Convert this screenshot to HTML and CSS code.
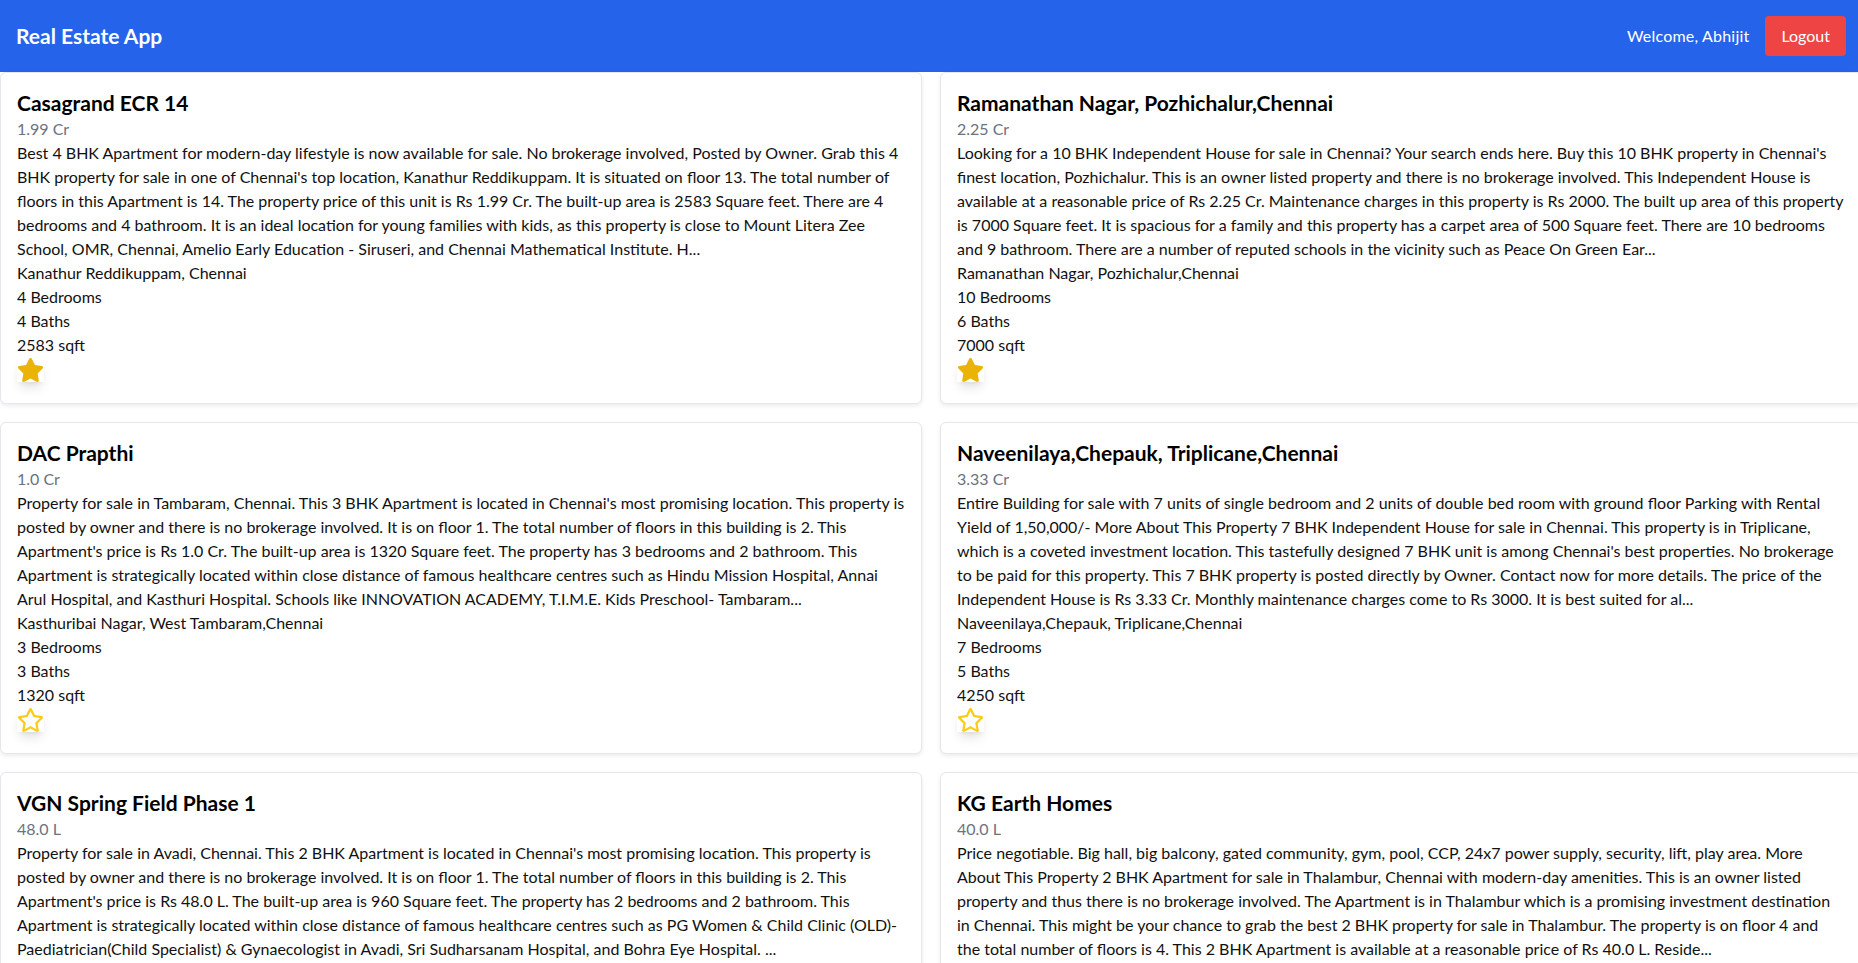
FILE: index.html
```html
<!DOCTYPE html>
<html lang="en">
<head>
<meta charset="utf-8">
<title>Real Estate App</title>
<link rel="stylesheet" href="styles.css">
</head>
<body>
<div class="app">
  <header class="topbar">
    <h1 class="brand">Real Estate App</h1>
    <div class="user">
      <span class="welcome">Welcome, Abhijit</span>
      <button class="logout">Logout</button>
    </div>
  </header>

  <main class="grid">
    <article class="card">
      <h2 class="card-title">Casagrand ECR 14</h2>
      <p class="price">1.99 Cr</p>
      <p class="desc">Best 4 BHK Apartment for modern-day lifestyle is now available for sale. No brokerage involved, Posted by Owner. Grab this 4 BHK property for sale in one of Chennai's top location, Kanathur Reddikuppam. It is situated on floor 13. The total number of floors in this Apartment is 14. The property price of this unit is Rs 1.99 Cr. The built-up area is 2583 Square feet. There are 4 bedrooms and 4 bathroom. It is an ideal location for young families with kids, as this property is close to Mount Litera Zee School, OMR, Chennai, Amelio Early Education - Siruseri, and Chennai Mathematical Institute. H...</p>
      <p class="meta">Kanathur Reddikuppam, Chennai</p>
      <p class="meta">4 Bedrooms</p>
      <p class="meta">4 Baths</p>
      <p class="meta">2583 sqft</p>
      <div class="fav">
        <svg class="star filled" viewBox="0 0 576 512" width="27" height="24"><path d="M259.3 17.8L194 150.2 47.9 171.5c-26.2 3.8-36.7 36.1-17.7 54.6l105.7 103-25 145.5c-4.5 26.3 23.2 46 46.4 33.7L288 439.6l130.7 68.7c23.2 12.200 50.9-7.4 46.4-33.7l-25-145.5 105.7-103c19-18.5 8.5-50.8-17.7-54.6L382 150.2 316.7 17.8c-11.7-23.6-45.6-23.9-57.4 0z"/></svg>
      </div>
    </article>

    <article class="card">
      <h2 class="card-title">Ramanathan Nagar, Pozhichalur,Chennai</h2>
      <p class="price">2.25 Cr</p>
      <p class="desc">Looking for a 10 BHK Independent House for sale in Chennai? Your search ends here. Buy this 10 BHK property in Chennai's finest location, Pozhichalur. This is an owner listed property and there is no brokerage involved. This Independent House is available at a reasonable price of Rs 2.25 Cr. Maintenance charges in this property is Rs 2000. The built up area of this property is 7000 Square feet. It is spacious for a family and this property has a carpet area of 500 Square feet. There are 10 bedrooms and 9 bathroom. There are a number of reputed schools in the vicinity such as Peace On Green Ear...</p>
      <p class="meta">Ramanathan Nagar, Pozhichalur,Chennai</p>
      <p class="meta">10 Bedrooms</p>
      <p class="meta">6 Baths</p>
      <p class="meta">7000 sqft</p>
      <div class="fav">
        <svg class="star filled" viewBox="0 0 576 512" width="27" height="24"><path d="M259.3 17.8L194 150.2 47.9 171.5c-26.2 3.8-36.7 36.1-17.7 54.6l105.7 103-25 145.5c-4.5 26.3 23.2 46 46.4 33.7L288 439.6l130.7 68.7c23.2 12.200 50.9-7.4 46.4-33.7l-25-145.5 105.7-103c19-18.5 8.5-50.8-17.7-54.6L382 150.2 316.7 17.8c-11.7-23.6-45.6-23.9-57.4 0z"/></svg>
      </div>
    </article>

    <article class="card">
      <h2 class="card-title">DAC Prapthi</h2>
      <p class="price">1.0 Cr</p>
      <p class="desc">Property for sale in Tambaram, Chennai. This 3 BHK Apartment is located in Chennai's most promising location. This property is posted by owner and there is no brokerage involved. It is on floor 1. The total number of floors in this building is 2. This Apartment's price is Rs 1.0 Cr. The built-up area is 1320 Square feet. The property has 3 bedrooms and 2 bathroom. This Apartment is strategically located within close distance of famous healthcare centres such as Hindu Mission Hospital, Annai Arul Hospital, and Kasthuri Hospital. Schools like INNOVATION ACADEMY, T.I.M.E. Kids Preschool- Tambaram...</p>
      <p class="meta">Kasthuribai Nagar, West Tambaram,Chennai</p>
      <p class="meta">3 Bedrooms</p>
      <p class="meta">3 Baths</p>
      <p class="meta">1320 sqft</p>
      <div class="fav">
        <svg class="star outline" viewBox="0 0 576 512" width="27" height="24"><path d="M528.1 171.5L382 150.2 316.7 17.8c-11.7-23.6-45.6-23.9-57.4 0L194 150.2 47.9 171.5c-26.2 3.8-36.7 36.1-17.7 54.6l105.7 103-25 145.5c-4.5 26.3 23.2 46 46.4 33.7L288 439.6l130.7 68.7c23.2 12.2 50.9-7.4 46.4-33.7l-25-145.5 105.7-103c19-18.5 8.5-50.8-17.7-54.6zM388.6 312.3l23.7 138.4L288 385.4l-124.3 65.3 23.7-138.4-100.6-98 139-20.2 62.2-126 62.2 126 139 20.2-100.6 98z"/></svg>
      </div>
    </article>

    <article class="card">
      <h2 class="card-title">Naveenilaya,Chepauk, Triplicane,Chennai</h2>
      <p class="price">3.33 Cr</p>
      <p class="desc">Entire Building for sale with 7 units of single bedroom and 2 units of double bed room with ground floor Parking with Rental Yield of 1,50,000/- More About This Property 7 BHK Independent House for sale in Chennai. This property is in Triplicane, which is a coveted investment location. This tastefully designed 7 BHK unit is among Chennai's best properties. No brokerage to be paid for this property. This 7 BHK property is posted directly by Owner. Contact now for more details. The price of the Independent House is Rs 3.33 Cr. Monthly maintenance charges come to Rs 3000. It is best suited for al...</p>
      <p class="meta">Naveenilaya,Chepauk, Triplicane,Chennai</p>
      <p class="meta">7 Bedrooms</p>
      <p class="meta">5 Baths</p>
      <p class="meta">4250 sqft</p>
      <div class="fav">
        <svg class="star outline" viewBox="0 0 576 512" width="27" height="24"><path d="M528.1 171.5L382 150.2 316.7 17.8c-11.7-23.6-45.6-23.9-57.4 0L194 150.2 47.9 171.5c-26.2 3.8-36.7 36.1-17.7 54.6l105.7 103-25 145.5c-4.5 26.3 23.2 46 46.4 33.7L288 439.6l130.7 68.7c23.2 12.2 50.9-7.4 46.4-33.7l-25-145.5 105.7-103c19-18.5 8.5-50.8-17.7-54.6zM388.6 312.3l23.7 138.4L288 385.4l-124.3 65.3 23.7-138.4-100.6-98 139-20.2 62.2-126 62.2 126 139 20.2-100.6 98z"/></svg>
      </div>
    </article>

    <article class="card">
      <h2 class="card-title">VGN Spring Field Phase 1</h2>
      <p class="price">48.0 L</p>
      <p class="desc">Property for sale in Avadi, Chennai. This 2 BHK Apartment is located in Chennai's most promising location. This property is posted by owner and there is no brokerage involved. It is on floor 1. The total number of floors in this building is 2. This Apartment's price is Rs 48.0 L. The built-up area is 960 Square feet. The property has 2 bedrooms and 2 bathroom. This Apartment is strategically located within close distance of famous healthcare centres such as PG Women &amp; Child Clinic (OLD)-Paediatrician(Child Specialist) &amp; Gynaecologist in Avadi, Sri Sudharsanam Hospital, and Bohra Eye Hospital. ...</p>
      <p class="meta">Avadi, Chennai</p>
      <p class="meta">2 Bedrooms</p>
      <p class="meta">2 Baths</p>
      <p class="meta">960 sqft</p>
      <div class="fav">
        <svg class="star outline" viewBox="0 0 576 512" width="27" height="24"><path d="M528.1 171.5L382 150.2 316.7 17.8c-11.7-23.6-45.6-23.9-57.4 0L194 150.2 47.9 171.5c-26.2 3.8-36.7 36.1-17.7 54.6l105.7 103-25 145.5c-4.5 26.3 23.2 46 46.4 33.7L288 439.6l130.7 68.7c23.2 12.2 50.9-7.4 46.4-33.7l-25-145.5 105.7-103c19-18.5 8.5-50.8-17.7-54.6zM388.6 312.3l23.7 138.4L288 385.4l-124.3 65.3 23.7-138.4-100.6-98 139-20.2 62.2-126 62.2 126 139 20.2-100.6 98z"/></svg>
      </div>
    </article>

    <article class="card">
      <h2 class="card-title">KG Earth Homes</h2>
      <p class="price">40.0 L</p>
      <p class="desc">Price negotiable. Big hall, big balcony, gated community, gym, pool, CCP, 24x7 power supply, security, lift, play area. More About This Property 2 BHK Apartment for sale in Thalambur, Chennai with modern-day amenities. This is an owner listed property and thus there is no brokerage involved. The Apartment is in Thalambur which is a promising investment destination in Chennai. This might be your chance to grab the best 2 BHK property for sale in Thalambur. The property is on floor 4 and the total number of floors is 4. This 2 BHK Apartment is available at a reasonable price of Rs 40.0 L. Reside...</p>
      <p class="meta">Thalambur, Chennai</p>
      <p class="meta">2 Bedrooms</p>
      <p class="meta">2 Baths</p>
      <p class="meta">1075 sqft</p>
      <div class="fav">
        <svg class="star outline" viewBox="0 0 576 512" width="27" height="24"><path d="M528.1 171.5L382 150.2 316.7 17.8c-11.7-23.6-45.6-23.9-57.4 0L194 150.2 47.9 171.5c-26.2 3.8-36.7 36.1-17.7 54.6l105.7 103-25 145.5c-4.5 26.3 23.2 46 46.4 33.7L288 439.6l130.7 68.7c23.2 12.2 50.9-7.4 46.4-33.7l-25-145.5 105.7-103c19-18.5 8.5-50.8-17.7-54.6zM388.6 312.3l23.7 138.4L288 385.4l-124.3 65.3 23.7-138.4-100.6-98 139-20.2 62.2-126 62.2 126 139 20.2-100.6 98z"/></svg>
      </div>
    </article>
  </main>
</div>
</body>
</html>
```

FILE: styles.css
```css
* {
  box-sizing: border-box;
}

html {
  overflow-x: hidden;
}

body {
  margin: 0;
  background: #ffffff;
  font-family: Lato, "Liberation Sans", sans-serif;
  font-size: 16px;
  line-height: 24px;
  color: #111111;
}

.app {
  width: 1862px;
}

.topbar {
  display: flex;
  align-items: center;
  justify-content: space-between;
  height: 72px;
  padding: 16px;
  background: #2563eb;
  color: #ffffff;
}

.brand {
  margin: 0;
  font-size: 21px;
  line-height: 28px;
  font-weight: 700;
}

.user {
  display: flex;
  align-items: center;
  gap: 16px;
}

.welcome {
  font-size: 16px;
  letter-spacing: 0.2px;
}

.logout {
  height: 40px;
  padding: 8px 16px;
  border: 0;
  border-radius: 4px;
  background: #ef4444;
  color: #ffffff;
  font-family: inherit;
  font-size: 16px;
  line-height: 24px;
}

.grid {
  display: grid;
  grid-template-columns: 922px 922px;
  gap: 18px;
}

.card {
  padding: 16px;
  border: 1px solid #e5e7eb;
  border-radius: 6px;
  background: #ffffff;
  box-shadow: 0 2px 4px rgba(0, 0, 0, 0.08);
}

.card-title {
  margin: 0;
  font-size: 21px;
  line-height: 28px;
  font-weight: 700;
  color: #000000;
}

.price {
  margin: 0;
  color: #6b7280;
}

.desc,
.meta {
  margin: 0;
}

.fav {
  height: 30px;
  padding-top: 1px;
}

.star {
  display: block;
  background: #ffffff;
  box-shadow: 0 8px 12px -3px rgba(0, 0, 0, 0.12), 0 3px 5px -3px rgba(0, 0, 0, 0.1);
}

.star.filled {
  fill: #eab308;
}

.star.outline {
  fill: #facc15;
}
```
